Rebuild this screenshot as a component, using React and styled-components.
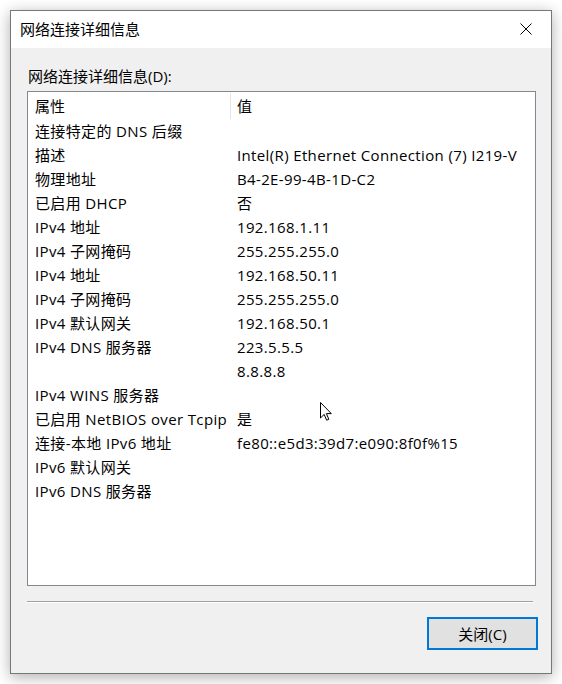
import React from "react";
import styled, { createGlobalStyle } from "styled-components";

const GlobalStyle = createGlobalStyle`
  html, body { margin: 0; padding: 0; background: #ffffff; }
  body {
    font-family: "Open Sans", "Noto Sans CJK SC", sans-serif;
    color: #000;
  }
`;

const Page = styled.div`
  position: relative;
  width: 562px;
  height: 684px;
  padding: 10px;
  box-sizing: border-box;
`;

const Window = styled.div`
  width: 542px;
  height: 664px;
  box-sizing: border-box;
  border: 1px solid #777777;
  box-shadow: 0 3px 14px rgba(0, 0, 0, 0.32);
  display: flex;
  flex-direction: column;
  background: #f0f0f0;
`;

const TitleBar = styled.div`
  height: 37px;
  flex: none;
  background: #ffffff;
  display: flex;
  align-items: center;
  justify-content: space-between;
  padding-left: 9px;
`;

const TitleText = styled.div`
  font-size: 15px;
  line-height: 20px;
  margin-top: -2px;
`;

const CloseBox = styled.div`
  width: 46px;
  height: 37px;
  display: flex;
  align-items: center;
  justify-content: center;
  margin-right: 2px;
  margin-top: -1px;
`;

const Body = styled.div`
  flex: 1;
  display: flex;
  flex-direction: column;
  padding: 18px 14px 0 16px;
`;

const Label = styled.div`
  font-size: 15px;
  line-height: 20px;
  height: 20px;
  padding-left: 1px;
`;

const ListBox = styled.div`
  margin-top: 5px;
  width: 509px;
  height: 495px;
  box-sizing: border-box;
  border: 1px solid #828790;
  background: #ffffff;
  display: flex;
  flex-direction: column;
`;

const HeaderRow = styled.div`
  display: grid;
  grid-template-columns: 203px 1fr;
  height: 27px;
  flex: none;
`;

const HeaderCell = styled.div`
  font-size: 15px;
  padding-left: ${(p) => p.$pad}px;
  border-right: ${(p) => (p.$divider ? "1px solid #e5e5e5" : "none")};
  height: 26px;
  margin-top: 1px;
  line-height: 26px;
`;

const Row = styled.div`
  display: grid;
  grid-template-columns: 203px 1fr;
  height: 24px;
  flex: none;
`;

const Cell = styled.div`
  font-size: 15px;
  line-height: 24px;
  letter-spacing: 0.36px;
  white-space: nowrap;
  padding-left: ${(p) => p.$pad}px;
`;

const Separator = styled.div`
  margin-top: 15px;
  width: 506px;
  height: 1px;
  background: #a0a0a0;
  border-bottom: 1px solid #ffffff;
`;

const ButtonRow = styled.div`
  margin-top: 14px;
  display: flex;
  justify-content: flex-end;
`;

const Button = styled.button`
  width: 111px;
  height: 33px;
  box-sizing: border-box;
  border: 2px solid #0078d7;
  background: #e1e1e1;
  font-family: inherit;
  font-size: 15px;
  color: #000;
  padding: 0;
  margin-right: -1px;
`;

const Cursor = styled.svg`
  position: absolute;
  left: 320px;
  top: 402px;
`;

const rows = [
  ["连接特定的 DNS 后缀", ""],
  ["描述", "Intel(R) Ethernet Connection (7) I219-V"],
  ["物理地址", "B4-2E-99-4B-1D-C2"],
  ["已启用 DHCP", "否"],
  ["IPv4 地址", "192.168.1.11"],
  ["IPv4 子网掩码", "255.255.255.0"],
  ["IPv4 地址", "192.168.50.11"],
  ["IPv4 子网掩码", "255.255.255.0"],
  ["IPv4 默认网关", "192.168.50.1"],
  ["IPv4 DNS 服务器", "223.5.5.5"],
  ["", "8.8.8.8"],
  ["IPv4 WINS 服务器", ""],
  ["已启用 NetBIOS over Tcpip", "是"],
  ["连接-本地 IPv6 地址", "fe80::e5d3:39d7:e090:8f0f%15"],
  ["IPv6 默认网关", ""],
  ["IPv6 DNS 服务器", ""],
];

export default function App() {
  return (
    <>
      <GlobalStyle />
      <Page>
        <Window>
          <TitleBar>
            <TitleText>网络连接详细信息</TitleText>
            <CloseBox>
              <svg width="12" height="12" viewBox="0 0 12 12">
                <path d="M0.5 0.5 L11.5 11.5 M11.5 0.5 L0.5 11.5" stroke="#000" strokeWidth="1" fill="none" />
              </svg>
            </CloseBox>
          </TitleBar>
          <Body>
            <Label>网络连接详细信息(D):</Label>
            <ListBox>
              <HeaderRow>
                <HeaderCell $pad={7} $divider>属性</HeaderCell>
                <HeaderCell $pad={6}>值</HeaderCell>
              </HeaderRow>
              {rows.map(([k, v], i) => (
                <Row key={i}>
                  <Cell $pad={7}>{k}</Cell>
                  <Cell $pad={6}>{v}</Cell>
                </Row>
              ))}
            </ListBox>
            <Separator />
            <ButtonRow>
              <Button>关闭(C)</Button>
            </ButtonRow>
          </Body>
        </Window>
        <Cursor width="13" height="20" viewBox="0 0 13 20">
          <path d="M0.5 0.5 L0.5 16 L4.2 12.4 L6.6 18.2 L8.8 17.3 L6.4 11.6 L11.3 11.6 Z" fill="#fff" stroke="#000" strokeWidth="1" strokeLinejoin="miter" />
        </Cursor>
      </Page>
    </>
  );
}
